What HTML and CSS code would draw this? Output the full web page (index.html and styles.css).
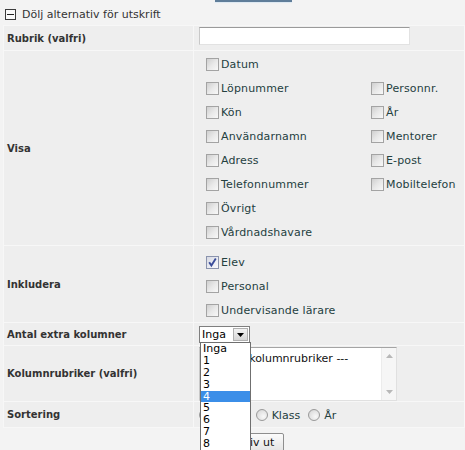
FILE: index.html
```html
<!DOCTYPE html>
<html>
<head>
<meta charset="utf-8">
<link rel="stylesheet" href="styles.css">
</head>
<body>
<div class="page">
  <div class="topbar"><div class="tab"></div></div>
  <div class="toggle"><span class="minus"></span><span>Dölj alternativ för utskrift</span></div>
  <table class="opts">
    <tr class="r-rubrik">
      <td class="lbl">Rubrik (valfri)</td>
      <td class="val"><div class="input"></div></td>
    </tr>
    <tr class="r-visa">
      <td class="lbl">Visa</td>
      <td class="val">
        <div class="checks">
          <label class="chk"><span class="cb"></span>Datum</label><span></span>
          <label class="chk"><span class="cb"></span>Löpnummer</label><label class="chk"><span class="cb"></span>Personnr.</label>
          <label class="chk"><span class="cb"></span>Kön</label><label class="chk"><span class="cb"></span>År</label>
          <label class="chk"><span class="cb"></span>Användarnamn</label><label class="chk"><span class="cb"></span>Mentorer</label>
          <label class="chk"><span class="cb"></span>Adress</label><label class="chk"><span class="cb"></span>E-post</label>
          <label class="chk"><span class="cb"></span>Telefonnummer</label><label class="chk"><span class="cb"></span>Mobiltelefon</label>
          <label class="chk"><span class="cb"></span>Övrigt</label><span></span>
          <label class="chk"><span class="cb"></span>Vårdnadshavare</label><span></span>
        </div>
      </td>
    </tr>
    <tr class="r-inkl">
      <td class="lbl">Inkludera</td>
      <td class="val">
        <div class="checks single">
          <label class="chk"><span class="cb checked"><svg width="11" height="11" viewBox="0 0 11 11"><path d="M2.2 5.2 L4.4 8.6 L8.8 1.6" fill="none" stroke="#3a4c9a" stroke-width="1.9"/></svg></span>Elev</label>
          <label class="chk"><span class="cb"></span>Personal</label>
          <label class="chk"><span class="cb"></span>Undervisande lärare</label>
        </div>
      </td>
    </tr>
    <tr class="r-antal">
      <td class="lbl">Antal extra kolumner</td>
      <td class="val"><div class="select"><span class="sel-text">Inga</span><span class="sel-btn"><svg width="7" height="4" viewBox="0 0 7 4"><path d="M0 0 H7 L3.5 4 Z" fill="#000"/></svg></span></div></td>
    </tr>
    <tr class="r-kol">
      <td class="lbl">Kolumnrubriker (valfri)</td>
      <td class="val">
        <div class="textarea">
          <div class="ta-text">--- Ange kolumnrubriker ---</div>
          <div class="ta-scroll">
            <svg width="7" height="4" viewBox="0 0 7 4"><path d="M0 4 H7 L3.5 0 Z" fill="#b8b8b8"/></svg>
            <svg width="7" height="4" viewBox="0 0 7 4"><path d="M0 0 H7 L3.5 4 Z" fill="#b8b8b8"/></svg>
          </div>
        </div>
      </td>
    </tr>
    <tr class="r-sort">
      <td class="lbl">Sortering</td>
      <td class="val">
        <div class="radios">
          <label class="rad"><span class="rb"></span>Namn</label>
          <label class="rad"><span class="rb"></span>Klass</label>
          <label class="rad"><span class="rb"></span>År</label>
        </div>
      </td>
    </tr>
  </table>
  <div class="actions"><button class="btn" type="button">Skriv ut</button></div>

  <ul class="dropdown">
    <li>Inga</li>
    <li>1</li>
    <li>2</li>
    <li>3</li>
    <li class="hl">4</li>
    <li>5</li>
    <li>6</li>
    <li>7</li>
    <li>8</li>
  </ul>
</div>
</body>
</html>
```
FILE: styles.css
```css
html, body {
  margin: 0;
  padding: 0;
  background: #f3f3f3;
}
body {
  font-family: "DejaVu Sans", Verdana, sans-serif;
  font-size: 11px;
  color: #333;
  width: 465px;
  height: 450px;
  overflow: hidden;
}
.page {
  position: relative;
  height: 450px;
}
.topbar {
  height: 3px;
}
.tab {
  margin-left: 215px;
  width: 77px;
  height: 2px;
  background: #5f7d99;
  box-shadow: 0 1px 1px #dce8f2;
}
.toggle {
  height: 22px;
  display: flex;
  align-items: center;
  padding-left: 5px;
  color: #333;
}
.minus {
  position: relative;
  width: 11px;
  height: 11px;
  box-sizing: border-box;
  border: 1px solid #3c3c3c;
  background: #fafafa;
  margin-right: 6px;
}
.minus::after {
  content: "";
  position: absolute;
  left: 1px;
  right: 1px;
  top: 4px;
  height: 1px;
  background: #222;
}
.opts {
  margin-left: 3px;
  width: 462px;
  border-collapse: separate;
  border-spacing: 1px;
  background: #f7f7f7;
}
.opts td {
  padding: 0;
  background: #eeeeee;
}
.lbl {
  width: 189px;
  padding-left: 3px !important;
  font-weight: bold;
  font-size: 10px;
  color: #333;
  vertical-align: middle;
  box-sizing: border-box;
}
.val {
  padding-left: 5px !important;
  vertical-align: top;
}
.r-rubrik td { height: 23px; }
.r-rubrik .val { padding-top: 1px !important; }
.r-visa td { height: 193px; }
.r-visa .val { padding-top: 1px !important; }
.r-inkl td { height: 72px; }
.r-inkl .val { padding-top: 4px !important; }
.r-antal td { height: 19px; }
.r-antal .val { padding-top: 3px !important; }
.r-kol td { height: 54px; }
.r-kol .val { padding-top: 1px !important; }
.r-sort td { height: 22px; }
.r-sort .val { padding-top: 3px !important; }

.input {
  width: 211px;
  height: 18px;
  box-sizing: border-box;
  background: #fff;
  border: 1px solid #e2e2e2;
  border-top-color: #9a9a9a;
  border-left-color: #c8c8c8;
}

.checks {
  margin-left: 7px;
  display: grid;
  grid-template-columns: 165px auto;
  grid-auto-rows: 24px;
}
.checks.single {
  grid-template-columns: auto;
}
.chk {
  display: flex;
  align-items: center;
  color: #24403f;
  font-size: 11px;
  letter-spacing: 0.15px;
}
.cb {
  width: 13px;
  height: 13px;
  box-sizing: border-box;
  border: 1px solid #a3a3a3;
  background: linear-gradient(135deg, #cfcfcf 0%, #e8e8e8 50%, #f8f8f8 100%);
  margin-right: 2px;
  display: flex;
  align-items: center;
  justify-content: center;
  flex: none;
}
.cb.checked {
  border-color: #8a93ad;
  background: linear-gradient(135deg, #d6d8e2 0%, #eceef4 60%, #f8f8fb 100%);
}

.select {
  width: 51px;
  height: 17px;
  box-sizing: border-box;
  border: 1px solid #7f7f7f;
  background: #fff;
  display: flex;
  align-items: center;
  justify-content: space-between;
  padding: 0 1px 0 2px;
}
.sel-text {
  color: #000;
  font-size: 11px;
}
.sel-btn {
  width: 15px;
  height: 13px;
  box-sizing: border-box;
  border: 1px solid #b0b0b0;
  background: linear-gradient(#f2f2f2, #d6d6d6);
  display: flex;
  align-items: center;
  justify-content: center;
}

.textarea {
  width: 198px;
  height: 54px;
  box-sizing: border-box;
  background: #fff;
  border: 1px solid #e0e0e0;
  border-top-color: #a4a4a4;
  border-left-color: #c8c8c8;
  display: flex;
}
.ta-text {
  flex: 1;
  padding: 4px 0 0 2px;
  color: #111;
  font-size: 11px;
}
.ta-scroll {
  width: 14px;
  background: #f6f6f6;
  border-left: 1px solid #ececec;
  display: flex;
  flex-direction: column;
  align-items: center;
  justify-content: space-between;
  padding: 6px 0 6px;
}

.radios {
  display: flex;
  align-items: center;
  height: 20px;
}
.rad {
  display: flex;
  align-items: center;
  color: #24403f;
  font-size: 11px;
  margin-right: 8px;
}
.rb {
  width: 12px;
  height: 12px;
  box-sizing: border-box;
  border-radius: 50%;
  border: 1px solid #9a9a9a;
  background: radial-gradient(circle at 65% 65%, #f8f8f8 0%, #e2e2e2 60%, #cccccc 100%);
  margin-right: 4px;
}

.actions {
  padding: 5px 0 0 222px;
}
.btn {
  font-family: "DejaVu Sans", Verdana, sans-serif;
  font-size: 11px;
  color: #111;
  height: 19px;
  padding: 0 9px;
  border: 1px solid #8e8e8e;
  border-radius: 2px;
  background: linear-gradient(#fbfbfb, #e4e4e4);
}

.dropdown {
  position: absolute;
  left: 200px;
  top: 342px;
  width: 51px;
  margin: 0;
  padding: 0;
  list-style: none;
  background: #fff;
  border: 1px solid #6f6f6f;
  box-sizing: border-box;
  height: 120px;
  overflow: hidden;
}
.dropdown li {
  line-height: 11.875px;
  height: 11.875px;
  padding-left: 2px;
  color: #000;
  font-size: 11px;
}
.dropdown li.hl {
  background: #3b8ee8;
  color: #fff;
}
```
